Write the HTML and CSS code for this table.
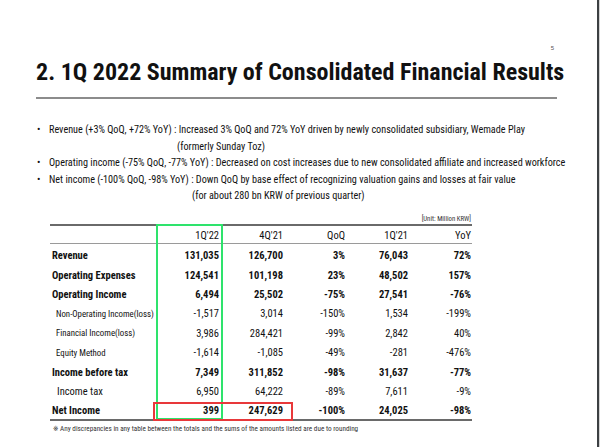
FILE: index.html
```html
<!DOCTYPE html>
<html>
<head>
<meta charset="utf-8">
<link rel="stylesheet" href="styles.css">
</head>
<body>
<div class="page">
  <div class="pnum">5</div>
  <h1 class="title">2. 1Q 2022 Summary of Consolidated Financial Results</h1>
  <div class="rule"></div>
  <ul class="bullets">
    <li><span class="dot">•</span><span>Revenue (+3% QoQ, +72% YoY) : Increased 3% QoQ and 72% YoY driven by newly consolidated subsidiary, Wemade Play</span></li>
    <li class="cont c1">(formerly Sunday Toz)</li>
    <li><span class="dot">•</span><span>Operating income (-75% QoQ, -77% YoY) : Decreased on cost increases due to new consolidated affiliate and increased workforce</span></li>
    <li><span class="dot">•</span><span>Net income (-100% QoQ, -98% YoY) : Down QoQ by base effect of recognizing valuation gains and losses at fair value</span></li>
    <li class="cont c2">(for about 280 bn KRW of previous quarter)</li>
  </ul>
  <div class="unit">[Unit: Million KRW]</div>
  <div class="fin">
    <div class="row head"><span></span><span>1Q'22</span><span>4Q'21</span><span>QoQ</span><span>1Q'21</span><span>YoY</span></div>
    <div class="row b"><span class="lab">Revenue</span><span>131,035</span><span>126,700</span><span>3%</span><span>76,043</span><span>72%</span></div>
    <div class="row b"><span class="lab">Operating Expenses</span><span>124,541</span><span>101,198</span><span>23%</span><span>48,502</span><span>157%</span></div>
    <div class="row b"><span class="lab">Operating Income</span><span>6,494</span><span>25,502</span><span>-75%</span><span>27,541</span><span>-76%</span></div>
    <div class="row"><span class="lab sm">Non-Operating Income(loss)</span><span>-1,517</span><span>3,014</span><span>-150%</span><span>1,534</span><span>-199%</span></div>
    <div class="row"><span class="lab sm">Financial Income(loss)</span><span>3,986</span><span>284,421</span><span>-99%</span><span>2,842</span><span>40%</span></div>
    <div class="row"><span class="lab sm">Equity Method</span><span>-1,614</span><span>-1,085</span><span>-49%</span><span>-281</span><span>-476%</span></div>
    <div class="row b"><span class="lab">Income before tax</span><span>7,349</span><span>311,852</span><span>-98%</span><span>31,637</span><span>-77%</span></div>
    <div class="row"><span class="lab ind">Income tax</span><span>6,950</span><span>64,222</span><span>-89%</span><span>7,611</span><span>-9%</span></div>
    <div class="row b lastrow"><span class="lab">Net Income</span><span>399</span><span>247,629</span><span>-100%</span><span>24,025</span><span>-98%</span></div>
    <div class="hl-green"></div>
    <div class="hl-red"></div>
  </div>
  <div class="note">※ Any discrepancies in any table between the totals and the sums of the amounts listed are due to rounding</div>
</div>
</body>
</html>
```
FILE: styles.css
```css
html, body {
  margin: 0;
  padding: 0;
  background: #d4d4d4;
}
body {
  width: 600px;
  height: 447px;
  overflow: hidden;
  font-family: "Liberation Sans Narrow", "Roboto Condensed", "DejaVu Sans Condensed", "Liberation Sans", sans-serif;
  color: #111;
}
.page {
  box-sizing: border-box;
  width: 599px;
  height: 447px;
  background: #fff;
  border-right: 2px solid #3c4043;
  padding-top: 44px;
}
.pnum {
  font-family: "Liberation Sans", sans-serif;
  font-size: 6px;
  color: #555;
  text-align: right;
  padding-right: 43px;
  height: 8px;
  line-height: 8px;
}
.title {
  margin: 0 0 0 36px;
  font-size: 24px;
  line-height: 40px;
  font-weight: bold;
  color: #111;
  letter-spacing: 0;
  white-space: nowrap;
}
.rule {
  margin: 5px 0 0 36px;
  width: 521px;
  height: 2px;
  background: #8c8c8c;
}
.bullets {
  list-style: none;
  margin: 23px 0 0 0;
  padding: 0;
  font-size: 10.2px;
}
.bullets li {
  display: flex;
  height: 16.5px;
  line-height: 16.5px;
  white-space: nowrap;
}
.dot {
  width: 12px;
  margin-left: 37px;
}
.cont.c1 { padding-left: 177px; }
.cont.c2 { padding-left: 192px; }
.unit {
  margin-top: 11px;
  width: 471px;
  text-align: right;
  font-size: 6.8px;
  height: 7px;
  line-height: 6px;
  color: #333;
}
.fin {
  position: relative;
  margin: 1.5px 0 0 50px;
  width: 422px;
  font-size: 10.5px;
}
.row {
  display: grid;
  grid-template-columns: 107px 66px 64px 62px 63px 60px;
  height: 19.4px;
  align-items: center;
  white-space: nowrap;
}
.row > span {
  text-align: right;
  padding-right: 4px;
  padding-top: 4px;
}
.row > span:last-child { padding-right: 1px; }
.row > span.lab {
  text-align: left;
  padding-left: 2px;
}
.row.head {
  box-sizing: border-box;
  height: 20px;
  border-top: 2px solid #6a6a6a;
  border-bottom: 1px solid #9a9a9a;
}
.row.head > span { padding-top: 2px; }
.row.b > span { font-weight: bold; }
.row > span.sm { font-size: 8.8px; padding-left: 6px; }
.row > span.ind { padding-left: 7px; }
.row.lastrow {
  box-sizing: content-box;
  border-bottom: 2px solid #6a6a6a;
}
.hl-green {
  position: absolute;
  left: 106px;
  top: 0;
  width: 63px;
  height: 192px;
  border: 2px solid #2ee36c;
}
.hl-red {
  position: absolute;
  left: 103px;
  top: 178px;
  width: 136px;
  height: 15px;
  border: 2px solid #e8383a;
}
.note {
  margin: 3px 0 0 53px;
  font-size: 7.2px;
  color: #333;
  white-space: nowrap;
}
```
